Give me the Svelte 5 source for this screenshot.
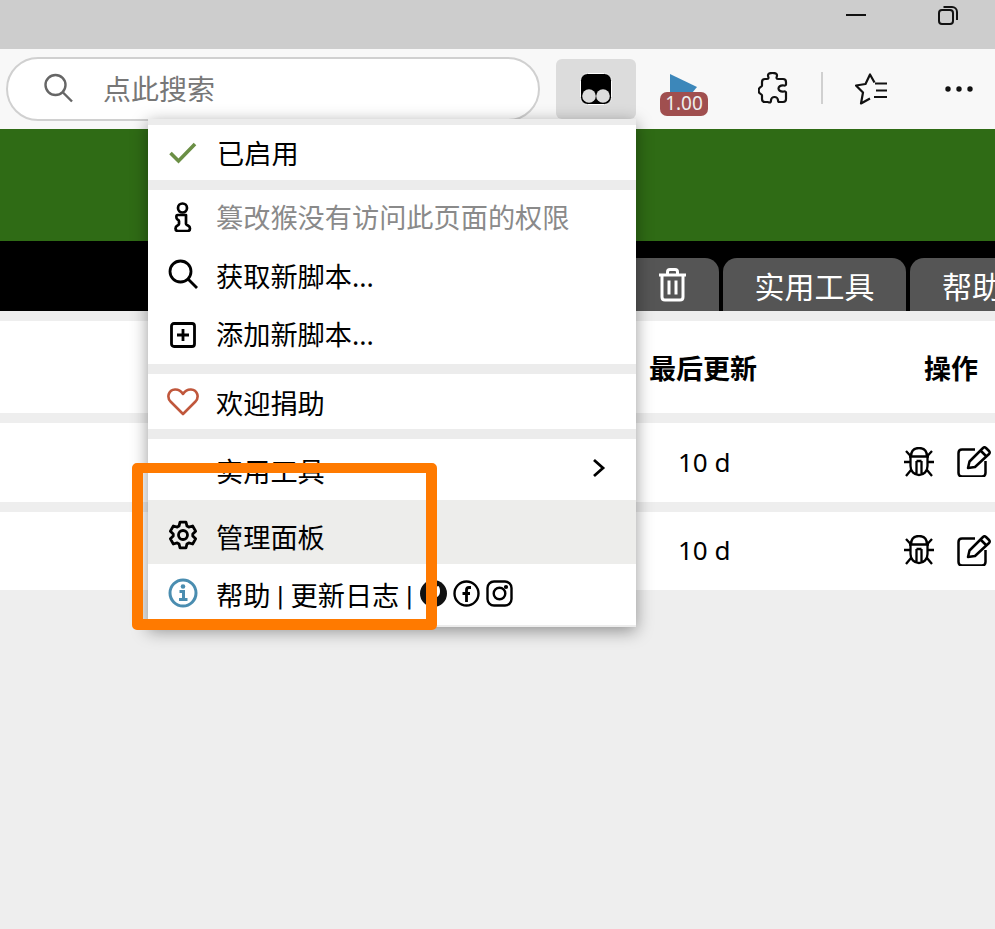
<script>
  const rows = [1, 2];

  // Six-lobed cog outline, centred in a 30×30 box.
  const gear = (() => {
    const pts = [];
    for (let i = 0; i < 6; i++) {
      const a = -90 + i * 60;
      for (const [d, r] of [[-24, 9.8], [-13, 13.2], [13, 13.2], [24, 9.8]]) {
        const t = ((a + d) * Math.PI) / 180;
        pts.push(`${(15 + r * Math.cos(t)).toFixed(2)} ${(15 + r * Math.sin(t)).toFixed(2)}`);
      }
    }
    return `M${pts.join("L")}Z`;
  })();
</script>

<div class="page">
  <header class="titlebar">
    <svg class="win min" width="20" height="4" viewBox="0 0 20 4"><path d="M0 2h20" stroke="#111" stroke-width="2"/></svg>
    <svg class="win" width="20" height="20" viewBox="0 0 20 20" fill="none" stroke="#111" stroke-width="2"><rect x="1" y="5" width="14" height="14" rx="3"/><path d="M5.500 2h8.500a5 5 0 0 1 5 5v8"/></svg>
  </header>

  <div class="toolbar">
    <div class="search">
      <svg width="30" height="30" viewBox="0 0 30 30" fill="none" stroke="#666" stroke-width="2.4"><circle cx="12.500" cy="12" r="10"/><path d="M20 19.500l9 9"/></svg>
      <span>点此搜索</span>
    </div>
    <div class="tools">
      <button class="tool active" aria-label="Tampermonkey">
        <svg width="32" height="32" viewBox="0 0 32 32"><rect x=".5" y=".5" width="31" height="31" rx="7" fill="#000" stroke="#fff"/><circle cx="9" cy="23" r="6.800" fill="#ddd"/><circle cx="23" cy="23" r="6.800" fill="#ddd"/></svg>
      </button>
      <div class="ext">
        <svg class="tri" width="30" height="22" viewBox="0 0 30 22"><path d="M1 0l27 13-5 6H1z" fill="#3c87ba"/></svg>
        <span class="badge">1.00</span>
      </div>
      <svg class="puzzle" width="30" height="33" viewBox="0 0 30 33" fill="none" stroke="#111" stroke-width="2.200" stroke-linejoin="round"><path d="M10.500 6c0-1-.5-1.500-.5-2.500 0-3.500 9-3.500 9 0 0 1-.5 1.500-.5 2.500 0 .7.500 1 1.500 1H25c2 0 3 1 3 3v2.500c0 .8-.8 1.200-2 1-4-.5-5.500 1.500-5.500 3s1.500 3.500 5.500 3c1.200-.2 2 .2 2 1V27c0 2-1 3-3 3h-3.500c-1.200 0-1.500-.8-1.500-1.800 0-1.700-1.500-3.200-3.500-3.200S13 26.500 13 28.200c0 1-.3 2.300-1.500 2.300-.8 0-1.200-.5-2-.5H7c-2 0-3-1-3-3v-3.500c0-1-1-1.200-2-2-1.800-1.500-1.800-4.500 0-6 1-.8 2-1 2-2V10c0-2 1-3 3-3h2c1 0 1.500-.3 1.500-1z"/></svg>
      <i class="sep"></i>
      <svg class="fav" width="34" height="32" viewBox="0 0 34 32" fill="none" stroke="#111" stroke-width="2.200" stroke-linejoin="round"><path d="M19.500 9.500L15 1.500 10.500 11 1 12.500l7 7-2 11 9-5"/><path d="M20 10.500h12M21 17.500h11M19 24h13"/></svg>
      <svg class="more" width="28" height="6" viewBox="0 0 28 6" fill="#111"><circle cx="3" cy="3" r="2.700"/><circle cx="14" cy="3" r="2.700"/><circle cx="25" cy="3" r="2.700"/></svg>
    </div>
  </div>

  <div class="green"></div>

  <nav class="tabbar">
    <div class="tab trash">
      <svg width="27" height="34" viewBox="0 0 27 34" fill="none" stroke="#fff" stroke-width="3" stroke-linejoin="round"><path d="M0 7h27M8.500 7V4c0-1.500 1-2.500 2.500-2.500h5c1.500 0 2.500 1 2.500 2.500v3M3 7v22c0 2 1 3 3 3h15c2 0 3-1 3-3V7M10 12.500v14M17 12.500v14"/></svg>
    </div>
    <div class="tab tools-tab">实用工具</div>
    <div class="tab help">帮助</div>
  </nav>

  <section class="table">
    <div class="head">
      <span class="c-upd">最后更新</span>
      <span class="c-act">操作</span>
    </div>
    {#each rows as r (r)}
      <div class="row">
        <span class="c-upd">10 d</span>
        <span class="c-act icons">
          <svg width="32" height="30" viewBox="0 0 32 30" fill="none" stroke="#000" stroke-width="2.300" stroke-linejoin="round"><path d="M8 9.500C8 3.500 11 1 16 1s8 2.500 8 8.500M6 9.500h20M7.500 9.500V19c0 5 3.500 9 8.500 9s8.500-4 8.500-9V9.500M13.500 14v13M18.500 14v13M13.500 14h5M1 15h7M24 15h7M3 4l5 5.500M29 4l-5 5.500M3 29l5-6M29 29l-5-6"/></svg>
          <svg width="34" height="31" viewBox="0 0 34 31" fill="none" stroke="#000" stroke-width="2.500" stroke-linejoin="round"><path d="M18 3.500H5C2.500 3.500 1.500 4.500 1.500 7v20c0 2.500 1 3.500 3.500 3.500h20c2.500 0 3.500-1 3.500-3.500V15"/><path d="M11 22l1.500-6.500L26 2c1-1 2-1 3 0l3 3c1 1 1 2 0 3L18 21zM23.500 4.500l6 6"/></svg>
        </span>
      </div>
    {/each}
  </section>

  <aside class="menu">
    <div class="group g1">
      <div class="item en">
        <svg class="ic" width="28" height="22" viewBox="0 0 28 22" fill="none" stroke="#6b8f45" stroke-width="3.600"><path d="M1.500 11l8 8L26 2"/></svg>
        <span>已启用</span>
      </div>
    </div>
    <div class="group g2">
      <div class="item muted">
        <svg class="ic up2" width="18" height="30" viewBox="0 0 18 30" fill="none" stroke="#000" stroke-width="2.700" stroke-linejoin="round"><circle cx="8.500" cy="6" r="4.500"/><path d="M4 13h8v9c0 .8 1 1 2 1.500 1.500.8 2 2 2 3 0 1.500-1 2.500-2.500 2.500H4c-1.500 0-2.500-1-2.500-2.500 0-1.500 1-2.500 2-3 1-.5 1.500-.8 1.500-1.500v-3c0-.7-.5-1-1.500-1.500-1.500-.8-1.500-4.500 0-4.500z"/></svg>
        <span>篡改猴没有访问此页面的权限</span>
      </div>
      <div class="item">
        <svg class="ic up3" width="30" height="30" viewBox="0 0 30 30" fill="none" stroke="#000" stroke-width="2.800"><circle cx="12.500" cy="12.500" r="10.500"/><path d="M20 20l9 9"/></svg>
        <span>获取新脚本...</span>
      </div>
      <div class="item">
        <svg class="ic" width="26" height="26" viewBox="0 0 26 26" fill="none" stroke="#000" stroke-width="2.800"><rect x="1.500" y="1.500" width="23" height="23" rx="2.500"/><path d="M13 7v12M7 13h12"/></svg>
        <span>添加新脚本...</span>
      </div>
    </div>
    <div class="group g3">
      <div class="item">
        <svg class="ic" width="32" height="28" viewBox="0 0 32 28" fill="none" stroke="#c0573c" stroke-width="2.600" stroke-linejoin="round"><path d="M16 26L3.500 13.500C-.5 9 1.500 2 8 1.500c3.500-.2 6 1.500 8 4.500 2-3 4.500-4.700 8-4.500 6.500.5 8.500 7.500 4.500 12z"/></svg>
        <span>欢迎捐助</span>
      </div>
    </div>
    <div class="group g4">
      <div class="item util">
        <i class="ic"></i>
        <span>实用工具</span>
        <svg class="arrow" width="14" height="20" viewBox="0 0 14 20" fill="none" stroke="#000" stroke-width="2.800"><path d="M2 2l9 8-9 8"/></svg>
      </div>
      <div class="item dash">
        <svg class="ic down3" width="30" height="30" viewBox="0 0 30 30" fill="none" stroke="#000" stroke-width="2.800" stroke-linejoin="round"><circle cx="15" cy="15" r="4.500"/><path d={gear}/></svg>
        <span>管理面板</span>
      </div>
      <div class="item info">
        <svg class="ic up2" width="30" height="30" viewBox="0 0 30 30" fill="none" stroke="#4a8db0" stroke-width="3"><circle cx="15" cy="15" r="13"/><circle cx="15" cy="8.500" r="2.300" fill="#4a8db0" stroke="none"/><path d="M11.500 13.500h4v8M11 21.500h8.500" stroke-width="3"/></svg>
        <span class="latin">帮助 | 更新日志 |</span>
        <span class="socials">
          <svg width="27" height="27" viewBox="0 0 27 27"><circle cx="13.500" cy="13.500" r="13.500" fill="#111"/><path d="M7 11c0-3 1-5 2-5l2.500 1.500h4L18 6c1 0 2 2 2 5 0 4-2 6-4 6.500v4h-5v-4c-2-.5-4-2.500-4-6.500z" fill="#fff"/></svg>
          <svg width="27" height="27" viewBox="0 0 27 27" fill="none" stroke="#000" stroke-width="2.400"><circle cx="13.500" cy="13.500" r="12"/><path d="M18 7.500h-2c-1.500 0-2.500 1-2.500 2.500v12M9.500 13.500h7.500" stroke-width="2.800"/></svg>
          <svg width="27" height="27" viewBox="0 0 27 27" fill="none" stroke="#000" stroke-width="2.400"><rect x="1.500" y="1.500" width="24" height="24" rx="6.500"/><circle cx="13.500" cy="13.500" r="5.800"/><circle cx="20" cy="7" r=".9" fill="#000"/></svg>
        </span>
      </div>
    </div>
  </aside>

  <div class="highlight"></div>
</div>

<style>
  :global(body) { margin: 0; background: #eeeeee; }
  .page {
    position: relative; width: 995px; height: 929px; overflow: hidden; background: #eeeeee;
    font-family: "Noto Sans", "Noto Sans CJK SC", sans-serif; color: #000;
  }
  .titlebar {
    height: 49px; background: #cdcdcd; display: flex; justify-content: flex-end;
    align-items: flex-start; gap: 72px; padding: 5px 37px 0 0; box-sizing: border-box;
  }
  .win.min { margin-top: 8px; }
  .toolbar {
    height: 80px; background: #f8f8f8; display: flex; align-items: flex-start;
    padding: 8px 0 0 6px; box-sizing: border-box; gap: 16px;
  }
  .search {
    width: 534px; height: 64px; box-sizing: border-box; background: #fff; border: 2px solid #d0d0d0;
    border-radius: 32px; display: flex; align-items: center; gap: 30px; padding: 0 0 3px 35px;
    font-size: 28px; color: #777;
  }
  .tools { display: flex; align-items: flex-start; }
  .tool.active {
    width: 80px; height: 60px; margin-top: 2px; border: 0; border-radius: 6px; background: #dcdcdc;
    display: flex; align-items: center; justify-content: center; padding: 0;
  }
  .ext { position: relative; width: 72px; height: 60px; margin-left: 24px; }
  .tri { position: absolute; left: 9px; top: 17px; }
  .badge {
    position: absolute; left: 0; top: 35px; width: 48px; height: 24px; border-radius: 7px;
    background: #a04f4f; color: #eee; font-size: 19px; line-height: 23px; text-align: center;
  }
  .puzzle { margin: 15px 0 0 26px; }
  .sep { width: 2px; height: 32px; background: #d0d0d0; margin: 15px 0 0 33px; }
  .fav { margin: 16px 0 0 32px; }
  .more { margin: 29px 0 0 56px; }
  .green { height: 112px; background: #2f6b15; }
  .tabbar {
    height: 70px; background: #000; display: flex; align-items: flex-end; gap: 4px;
    padding-left: 630px; box-sizing: border-box;
  }
  .tab {
    height: 53px; background: #555; color: #fff; border-radius: 14px 14px 0 0; font-size: 30px;
    display: flex; align-items: center; justify-content: center; box-sizing: border-box; flex: none;
  }
  .trash { width: 89px; padding: 0 5px 0 0; border-top-left-radius: 0; }
  .tools-tab { width: 183px; }
  .help { width: 85px; justify-content: flex-start; padding-left: 32px; overflow: hidden; white-space: nowrap; border-top-right-radius: 0; }
  .table { margin-top: 10px; display: flex; flex-direction: column; gap: 10px; }
  .head, .row { background: #fff; display: flex; align-items: center; }
  .head { height: 92px; font-size: 27px; font-weight: 700; }
  .row { height: 79px; font-size: 26px; padding-bottom: 2px; box-sizing: border-box; }
  .row + .row { height: 78px; }
  .c-upd { width: 108px; margin-left: 649px; }
  .row .c-upd { margin-left: 678px; width: 82px; }
  .head .c-act { margin-left: 167px; }
  .icons { display: flex; align-items: center; gap: 22px; margin-left: 143px; }

  .menu {
    position: absolute; left: 148px; top: 119px; width: 488px; height: 508px; background: #ececec;
    box-shadow: 0 4px 16px rgba(0, 0, 0, .4); display: flex; flex-direction: column; gap: 10px;
    padding: 6px 0 2px; box-sizing: border-box; font-size: 27.2px;
  }
  .group { background: #fff; display: flex; flex-direction: column; }
  .item { display: flex; align-items: center; position: relative; padding-left: 68px; box-sizing: border-box; }
  .item .ic { position: absolute; left: 35px; top: 50%; transform: translate(-50%, -50%); }
  .item .up2 { margin-top: -2px; }
  .item .up3 { margin-top: -3px; }
  .item .down3 { margin-top: 3px; }
  .en { height: 55px; padding-left: 69px; padding-bottom: 2px; }
  .g2 .item { height: 58px; padding-bottom: 4px; }
  .g2 .muted { padding-bottom: 6px; }
  .muted { color: #8a8a8a; }
  .g3 .item { height: 55px; }
  .util { height: 61px; }
  .arrow { position: absolute; right: 30px; top: 19px; }
  .dash { height: 64px; background: #ededeb; padding-top: 8px; }
  .info { height: 61px; padding-bottom: 2px; }
  .latin { font-family: Roboto, "Noto Sans CJK SC", sans-serif; }
  .socials { display: flex; gap: 6px; margin-left: 7px; }

  .highlight {
    position: absolute; left: 132px; top: 463px; width: 305px; height: 167px; box-sizing: border-box;
    border: 11px solid #ff7a00; border-width: 10px 11px 11px; border-radius: 5px;
  }
</style>
